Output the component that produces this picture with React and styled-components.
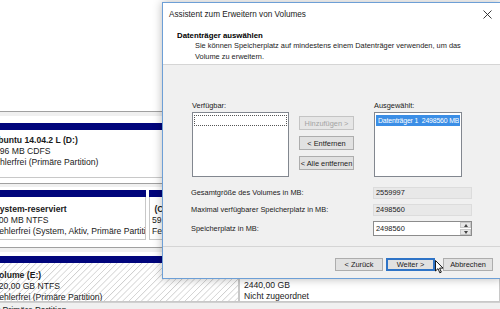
import React from 'react';
import styled, { createGlobalStyle } from 'styled-components';

const GlobalStyle = createGlobalStyle`
  html, body { margin: 0; padding: 0; }
  body {
    width: 500px;
    height: 309px;
    overflow: hidden;
    background: #ffffff;
    font-family: "Liberation Sans", Arial, sans-serif;
  }
`;

const Desktop = styled.div`
  position: relative;
  width: 500px;
  height: 309px;
  overflow: hidden;
  background: #ffffff;
`;

/* ---------- disk management behind the dialog ---------- */

const DiskList = styled.div`
  display: flex;
  flex-direction: column;
`;

const EmptyTop = styled.div`
  height: 111px;
  background: #ffffff;
`;

const DiskDivider = styled.div`
  height: ${p => p.$h || 4}px;
  margin-top: ${p => p.$mt || 0}px;
  background: #f0f0f0;
  border-top: 1px solid #a0a0a0;
`;

const DiskRow = styled.div`
  display: flex;
  padding: ${p => p.$pad || '7px 0 0 0'};
  background: #ffffff;
`;

const Partition = styled.div`
  display: flex;
  flex-direction: column;
  width: ${p => p.$w ? `${p.$w}px` : 'auto'};
  flex: ${p => p.$w ? 'none' : 1};
  margin-right: ${p => p.$mr || 0}px;
`;

const BlueBar = styled.div`
  height: 7px;
  background: #01057c;
`;

const PartBox = styled.div`
  height: ${p => p.$h}px;
  border: 1px solid #c8c8c8;
  border-top: none;
  border-left: ${p => p.$left ? '1px solid #c8c8c8' : 'none'};
  padding: ${p => p.$pad || '5px 0 0 0'};
  box-sizing: border-box;
  overflow: hidden;
  background: ${p => p.$hatch
    ? 'repeating-linear-gradient(135deg, #ffffff 0px, #ffffff 3px, #cfcfcf 3.6px, #ffffff 4.4px)'
    : '#ffffff'};
`;

const PartLine = styled.div`
  font-size: 8.6px;
  line-height: 11px;
  color: #1a1a1a;
  white-space: nowrap;
  margin-left: ${p => p.$shift || 0}px;
  font-weight: ${p => p.$bold ? 'bold' : 'normal'};
`;

const Legend = styled.div`
  height: 9px;
  background: #f0f0f0;
  border-top: 1px solid #d0d0d0;
  padding-top: 2px;
  font-size: 8.6px;
  line-height: 10px;
  color: #1a1a1a;
  white-space: nowrap;
  margin-left: -5px;
`;

/* ---------- the wizard dialog ---------- */

const Dialog = styled.div`
  position: absolute;
  left: 162px;
  top: 2px;
  width: 340px;
  height: 277px;
  box-sizing: border-box;
  border: 1px solid #6d9fd6;
  background: #f0f0f0;
  box-shadow: 0 0 9px rgba(0, 0, 0, 0.28);
  display: flex;
  flex-direction: column;
`;

const TitleBar = styled.div`
  height: 23px;
  flex: none;
  background: #ffffff;
  display: flex;
  align-items: center;
  justify-content: space-between;
  padding: 0 6px 0 6px;
`;

const TitleText = styled.span`
  font-size: 8.2px;
  color: #1a1a1a;
`;

const CloseIcon = styled.svg`
  width: 9px;
  height: 9px;
  margin-right: 3px;
`;

const Header = styled.div`
  flex: none;
  background: #ffffff;
  border-bottom: 1px solid #d5d5d5;
  padding: 4px 0 0 14px;
  box-sizing: border-box;
  height: 39px;
`;

const HeaderTitle = styled.div`
  font-size: 7.8px;
  font-weight: bold;
  color: #000000;
  line-height: 11px;
`;

const HeaderSub = styled.div`
  font-size: 7.4px;
  color: #1a1a1a;
  line-height: 10.5px;
  padding-left: 18px;
  width: 270px;
`;

const Body = styled.div`
  flex: 1;
  padding: 36px 0 0 29px;
  border-bottom: 1px solid #d5d5d5;
`;

const ListsGrid = styled.div`
  display: grid;
  grid-template-columns: 97px 55px 98px;
  column-gap: 10px;
  grid-template-rows: 11px 65px;
  & > :nth-child(3), & > :nth-child(6) { margin-left: 10px; }
`;

const Label = styled.div`
  font-size: 7.4px;
  color: #1a1a1a;
  line-height: 10px;
  white-space: nowrap;
`;

const ListBox = styled.div`
  border: 1px solid #82878f;
  background: #ffffff;
  padding: 2px 1px;
  box-sizing: border-box;
`;

const ListItem = styled.div`
  height: 9px;
  font-size: 6.9px;
  line-height: 9px;
  padding-left: 1px;
  white-space: pre;
  overflow: hidden;
  letter-spacing: -0.15px;
  color: ${p => p.$selected ? '#ffffff' : '#1a1a1a'};
  background: ${p => p.$selected ? '#3b8ee6' : 'transparent'};
  border: 1px dotted ${p => p.$focus ? '#555555' : 'transparent'};
`;

const ButtonColumn = styled.div`
  display: flex;
  flex-direction: column;
  gap: 6px;
  padding-top: 4px;
`;

const Button = styled.div`
  height: ${p => p.$h || 14}px;
  width: ${p => p.$w ? `${p.$w}px` : 'auto'};
  box-sizing: border-box;
  display: flex;
  align-items: center;
  justify-content: center;
  font-size: 7.4px;
  white-space: nowrap;
  color: ${p => p.$disabled ? '#a3a3a3' : '#1a1a1a'};
  background: ${p => p.$disabled ? '#e6e6e6' : '#e1e1e1'};
  border: ${p => p.$default ? '2px solid #2f74c7' : `1px solid ${p.$disabled ? '#c4c4c4' : '#adadad'}`};
`;

const Fields = styled.div`
  display: grid;
  grid-template-columns: 182px 99px;
  row-gap: 5px;
  margin-top: 10px;
  margin-left: -1px;
  align-items: center;
`;

const ReadField = styled.div`
  height: 12px;
  box-sizing: border-box;
  background: #e8e8e8;
  border: 1px solid #dcdcdc;
  font-size: 7.4px;
  line-height: 10px;
  padding-left: 2px;
  color: #1a1a1a;
`;

const SpinField = styled.div`
  height: 15px;
  box-sizing: border-box;
  background: #ffffff;
  border: 1px solid #8c8c8c;
  display: flex;
  align-items: center;
  justify-content: space-between;
  font-size: 7.4px;
  color: #1a1a1a;
  padding-left: 2px;
`;

const SpinButtons = styled.div`
  display: flex;
  flex-direction: column;
  width: 11px;
  height: 13px;
  gap: 1px;
`;

const SpinArrow = styled.div`
  flex: 1;
  background: #e6e6e6;
  border: 1px solid #c8c8c8;
  display: flex;
  align-items: center;
  justify-content: center;
  & svg { width: 4px; height: 3px; }
`;

const Footer = styled.div`
  height: 31px;
  flex: none;
  display: flex;
  justify-content: flex-end;
  align-items: flex-start;
  padding: 11px 8px 0 0;
  box-sizing: border-box;
`;

const NavButtons = styled.div`
  display: flex;
  gap: 3px;
  margin-right: 8px;
`;

const Cursor = styled.svg`
  position: absolute;
  left: 435px;
  top: 260px;
  width: 9px;
  height: 14px;
`;

const Arrow = ({ up }) => (
  <svg viewBox="0 0 4 3">
    <path d={up ? 'M0 3 L2 0 L4 3 Z' : 'M0 0 L4 0 L2 3 Z'} fill="#444" />
  </svg>
);

export default function App() {
  return (
    <>
      <GlobalStyle />
      <Desktop>
        <DiskList>
          <EmptyTop />
          <DiskDivider $h={4} />
          <DiskRow $pad="7px 0 0 0">
            <Partition>
              <BlueBar />
              <PartBox $h={48} $pad="5px 0 0 0">
                <PartLine $bold $shift={-8}>Ubuntu 14.04.2 L  (D:)</PartLine>
                <PartLine $shift={-5}>996 MB CDFS</PartLine>
                <PartLine $shift={-10}>Fehlerfrei (Primäre Partition)</PartLine>
              </PartBox>
            </Partition>
          </DiskRow>
          <DiskDivider $h={3} $mt={5} />
          <DiskRow $pad="3px 0 0 0">
            <Partition $w={146} $mr={3}>
              <BlueBar />
              <PartBox $h={43} $pad="7px 0 0 0">
                <PartLine $bold $shift={-6}>System-reserviert</PartLine>
                <PartLine $shift={-6}>500 MB NTFS</PartLine>
                <PartLine $shift={-6}>Fehlerfrei (System, Aktiv, Primäre Partition)</PartLine>
              </PartBox>
            </Partition>
            <Partition>
              <BlueBar />
              <PartBox $h={43} $left $pad="7px 0 0 2px">
                <PartLine $bold>&nbsp;(C:)</PartLine>
                <PartLine>59,51</PartLine>
                <PartLine>Fehl</PartLine>
              </PartBox>
            </Partition>
          </DiskRow>
          <DiskDivider $h={4} $mt={7} />
          <DiskRow $pad="4px 0 0 0">
            <Partition $w={239} $mr={0}>
              <BlueBar />
              <PartBox $h={39} $hatch $pad="7px 0 0 0">
                <PartLine $bold $shift={-6}>Volume  (E:)</PartLine>
                <PartLine $shift={-6}>120,00 GB NTFS</PartLine>
                <PartLine $shift={-6}>Fehlerfrei (Primäre Partition)</PartLine>
              </PartBox>
            </Partition>
            <Partition>
              <BlueBar />
              <PartBox $h={39} $left $pad="6px 0 0 4px">
                <PartLine>&nbsp;</PartLine>
                <PartLine>2440,00 GB</PartLine>
                <PartLine>Nicht zugeordnet</PartLine>
              </PartBox>
            </Partition>
          </DiskRow>
          <Legend>■ Primäre Partition</Legend>
        </DiskList>

        <Dialog>
          <TitleBar>
            <TitleText>Assistent zum Erweitern von Volumes</TitleText>
            <CloseIcon viewBox="0 0 9 9">
              <path d="M0.5 0.5 L8.5 8.5 M8.5 0.5 L0.5 8.5" stroke="#222" strokeWidth="0.9" />
            </CloseIcon>
          </TitleBar>
          <Header>
            <HeaderTitle>Datenträger auswählen</HeaderTitle>
            <HeaderSub>
              Sie können Speicherplatz auf mindestens einem Datenträger verwenden, um das Volume zu erweitern.
            </HeaderSub>
          </Header>
          <Body>
            <ListsGrid>
              <Label>Verfügbar:</Label>
              <div />
              <Label>Ausgewählt:</Label>
              <ListBox>
                <ListItem $focus>{' '}</ListItem>
              </ListBox>
              <ButtonColumn>
                <Button $disabled>Hinzufügen &gt;</Button>
                <Button>&lt; Entfernen</Button>
                <Button>&lt; Alle entfernen</Button>
              </ButtonColumn>
              <ListBox>
                <ListItem $selected>{'Datenträger 1  2498560 MB'}</ListItem>
              </ListBox>
            </ListsGrid>
            <Fields>
              <Label>Gesamtgröße des Volumes in MB:</Label>
              <ReadField>2559997</ReadField>
              <Label>Maximal verfügbarer Speicherplatz in MB:</Label>
              <ReadField>2498560</ReadField>
              <Label>Speicherplatz in MB:</Label>
              <SpinField>
                2498560
                <SpinButtons>
                  <SpinArrow><Arrow up /></SpinArrow>
                  <SpinArrow><Arrow /></SpinArrow>
                </SpinButtons>
              </SpinField>
            </Fields>
          </Body>
          <Footer>
            <NavButtons>
              <Button $w={48} $h={13}>&lt; Zurück</Button>
              <Button $w={49} $h={13} $default>Weiter &gt;</Button>
            </NavButtons>
            <Button $w={50} $h={13}>Abbrechen</Button>
          </Footer>
        </Dialog>

        <Cursor viewBox="0 0 9 14">
          <path d="M0.5 0.5 L0.5 11 L3 8.6 L4.8 12.8 L6.3 12.1 L4.6 8.1 L8 8.1 Z" fill="#ffffff" stroke="#000000" strokeWidth="0.9" strokeLinejoin="round" />
        </Cursor>
      </Desktop>
    </>
  );
}
